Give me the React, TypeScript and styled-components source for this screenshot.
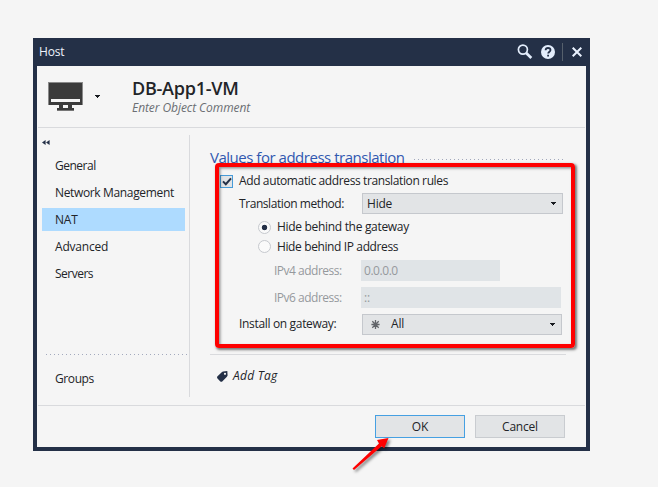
import React from "react";
import styled, { createGlobalStyle } from "styled-components";

const Global = createGlobalStyle`
  * { box-sizing: border-box; }
  html, body { margin: 0; background: #f5f5f5; }
  body { font-family: "Open Sans", "Noto Sans", sans-serif; font-size: 12px; line-height: 16px; color: #222428; overflow: hidden; }
  svg { display: block; flex: none; }
`;

const Desktop = styled.main`
  position: relative;
  width: 658px;
  height: 487px;
  padding: 38px 0 0 33px;
  background: #f5f5f5;
`;
const Text = styled.span<{ $ls?: number }>`
  white-space: pre;
  letter-spacing: ${(p) => p.$ls ?? -0.2}px;
`;
const Dialog = styled.section`
  display: flex;
  flex-direction: column;
  width: 557px;
  height: 413px;
  border: 4px solid #243047;
  border-top: 0;
`;
const TitleBar = styled.header`
  display: flex;
  align-items: center;
  height: 28px;
  padding: 0 4px 0 2px;
  background: #243047;
  color: #eef3fb;
`;
const TitleActions = styled.div`
  display: flex;
  align-items: center;
  margin-left: auto;
`;
const HelpIcon = styled.svg`
  margin-left: 8px;
`;
const TitleDivider = styled.i`
  width: 1px;
  height: 18px;
  margin: 0 9px 0 7px;
  background: #56606c;
`;
const ObjectHeader = styled.div`
  display: flex;
  height: 62px;
  margin: 0 1px;
  padding: 10px 0 0 10px;
  border-bottom: 1px solid #d9dadd;
`;
const ObjectIcon = styled.div`
  display: flex;
  width: 84px;
  padding-top: 6px;
`;
const IconMenu = styled.div`
  padding: 13px 0 0 12px;
`;
const ObjectTexts = styled.div`
  display: flex;
  flex-direction: column;
`;
const ObjectName = styled(Text)`
  font-size: 18px;
  line-height: 24px;
  font-weight: 600;
`;
const Comment = styled(Text)`
  font-style: italic;
  color: #6b6e73;
`;
const Body = styled.div`
  display: flex;
  height: 277px;
  padding-top: 7px;
`;
const Sidebar = styled.nav`
  display: flex;
  flex-direction: column;
  width: 153px;
  height: 262px;
  padding: 5px 0 0 5px;
  border-right: 1px solid #d9dadd;
`;
const NavList = styled.div`
  display: flex;
  flex-direction: column;
  gap: 4px;
  margin-top: 9px;
`;
const NavItem = styled.div<{ $active?: boolean }>`
  display: flex;
  align-items: center;
  width: 143px;
  height: 23px;
  padding-left: 13px;
  background: ${(p) => (p.$active ? "#aedbff" : "transparent")};
`;
const Dots = styled.i<{ $w: number }>`
  width: ${(p) => p.$w}px;
  height: 1px;
  background: repeating-linear-gradient(90deg, #a3a9bd 0 1px, transparent 1px 4px);
`;
const SidebarFoot = styled.div`
  display: flex;
  flex-direction: column;
  gap: 12px;
  margin-top: auto;
  margin-bottom: 7px;
`;
const FootDots = styled(Dots)`
  margin-left: 4px;
`;
const Content = styled.div`
  display: flex;
  flex-direction: column;
  width: 356px;
  margin-left: 20px;
`;
const Heading = styled.div`
  display: flex;
  justify-content: space-between;
  height: 38px;
  padding: 12px 3px 0 0;
`;
const HeadingText = styled(Text)`
  font-size: 15px;
  line-height: 20px;
  color: #3158b0;
`;
const HeadingDots = styled(Dots)`
  margin-top: 12px;
`;
const Row = styled.div<{ $h: number; $indent: number; $muted?: boolean }>`
  display: flex;
  align-items: center;
  height: ${(p) => p.$h}px;
  padding-left: ${(p) => p.$indent}px;
  color: ${(p) => (p.$muted ? "#96999d" : "inherit")};
`;
const Label = styled.div<{ $w: number }>`
  display: flex;
  width: ${(p) => p.$w}px;
`;
const Checkbox = styled.div`
  display: flex;
  align-items: center;
  justify-content: center;
  width: 13px;
  height: 13px;
  margin-right: 6px;
  border: 1px solid #479bd8;
  background: #e2e4e6;
`;
const Radio = styled.i<{ $on?: boolean }>`
  width: 13px;
  height: 13px;
  margin-right: 6px;
  border: 1px solid #c6c9ce;
  border-radius: 50%;
  background: ${(p) => (p.$on ? "radial-gradient(circle, #243047 2.4px, #fafafa 3.1px)" : "#fafafa")};
`;
const Select = styled.div<{ $w: number }>`
  display: flex;
  align-items: center;
  width: ${(p) => p.$w}px;
  height: 21px;
  padding: 0 6px 0 4px;
  border: 1px solid #c5c8cd;
  background: #e2e4e6;
  > svg { margin-left: auto; }
`;
const Glyph = styled.span`
  display: flex;
  width: 24px;
  padding-left: 4px;
`;
const Field = styled.div<{ $w: number }>`
  display: flex;
  align-items: center;
  width: ${(p) => p.$w}px;
  height: 21px;
  padding-left: 3px;
  background: #e0e4e7;
`;
const TagRow = styled.div`
  display: flex;
  align-items: center;
  gap: 5px;
  height: 43px;
  margin-top: 17px;
  padding-left: 7px;
  border-top: 1px solid #d9dadd;
  font-style: italic;
`;
const Footer = styled.footer`
  display: flex;
  justify-content: flex-end;
  gap: 10px;
  height: 42px;
  margin: 0 1px;
  padding: 9px 20px 0 0;
  border-top: 1px solid #d9dadd;
`;
const Button = styled.div<{ $primary?: boolean }>`
  display: flex;
  align-items: center;
  justify-content: center;
  width: 90px;
  height: 23px;
  border: 1px solid ${(p) => (p.$primary ? "#46a0e2" : "#c9ccd0")};
  background: #e2e4e6;
`;
const Highlight = styled.div`
  position: absolute;
  left: 215px;
  top: 163px;
  width: 360px;
  height: 185px;
  border: 4px solid #fe0000;
  border-radius: 4px;
  box-shadow: 1.5px 1.5px 2.5px rgba(0, 0, 0, 0.5), inset 1.5px 1.5px 2.5px rgba(0, 0, 0, 0.4);
`;
const Pointer = styled.svg`
  position: absolute;
  left: 345px;
  top: 430px;
  filter: drop-shadow(2px 2px 1.5px rgba(0, 0, 0, 0.5));
`;

const Caret = () => (
  <svg width="5" height="3" viewBox="0 0 5 3" shapeRendering="crispEdges">
    <path d="M0 0h5v1H0zM1 1h3v1H1zM2 2h1v1H2z" fill="#181b20" />
  </svg>
);

const navItems = [
  { label: "General", ls: -0.5 },
  { label: "Network Management", ls: -0.35 },
  { label: "NAT", ls: -0.2, active: true },
  { label: "Advanced", ls: -0.2 },
  { label: "Servers", ls: -0.5 },
];

export default function App() {
  return (
    <Desktop>
      <Global />
      <Dialog>
        <TitleBar>
          <Text>Host</Text>
          <TitleActions>
            <svg width="16" height="16" viewBox="0 0 16 16" fill="none" stroke="#e3edfc">
              <circle cx="5.9" cy="5.6" r="4.5" strokeWidth="1.7" />
              <path d="M9.2 9l5.1 5" strokeWidth="2.7" />
            </svg>
            <HelpIcon width="14" height="14" viewBox="0 0 14 14">
              <circle cx="7" cy="7" r="7" fill="#e3edfc" />
              <path d="M4.6 5.3C4.7 3.7 5.7 3 7 3c1.5 0 2.5.8 2.5 2 0 1.7-2.3 1.7-2.3 3.6M7.1 9.8v1.8" fill="none" stroke="#243047" strokeWidth="1.8" />
            </HelpIcon>
            <TitleDivider />
            <svg width="10" height="10" viewBox="0 0 10 10">
              <path d="M.7.7l8.6 8.6M9.3.7L.7 9.3" stroke="#eaf2ff" strokeWidth="2" />
            </svg>
          </TitleActions>
        </TitleBar>
        <ObjectHeader>
          <ObjectIcon>
            <svg width="35" height="29" viewBox="0 0 35 29" shapeRendering="crispEdges">
              <path d="M0 0h35v23H0z" fill="#8a8a8a" />
              <path d="M1 1h33v22H1z" fill="#3b3b3b" />
              <path d="M3 17h29v3H3z" fill="#f5f5f5" />
              <path d="M11 23h4v3h-4zM20 23h4v3h-4zM9 26h17v2H9z" fill="#3b3b3b" />
              <path d="M9 28h17v1H9z" fill="#777" />
            </svg>
            <IconMenu>
              <Caret />
            </IconMenu>
          </ObjectIcon>
          <ObjectTexts>
            <ObjectName $ls={-0.25}>DB-App1-VM</ObjectName>
            <Comment $ls={-0.07}>Enter Object Comment</Comment>
          </ObjectTexts>
        </ObjectHeader>
        <Body>
          <Sidebar>
            <svg width="8" height="5" viewBox="0 0 8 5">
              <path d="M3.6 0v5L0 2.5zM7.6 0v5L4 2.5z" fill="#243047" />
            </svg>
            <NavList>
              {navItems.map((n) => (
                <NavItem key={n.label} $active={n.active}>
                  <Text $ls={n.ls}>{n.label}</Text>
                </NavItem>
              ))}
            </NavList>
            <SidebarFoot>
              <FootDots $w={142} />
              <NavItem>
                <Text $ls={-0.4}>Groups</Text>
              </NavItem>
            </SidebarFoot>
          </Sidebar>
          <Content>
            <Heading>
              <HeadingText $ls={-0.48}>Values for address translation</HeadingText>
              <HeadingDots $w={149} />
            </Heading>
            <Row $h={16} $indent={10}>
              <Checkbox>
                <svg width="10" height="9" viewBox="0 0 10 9">
                  <path d="M1 4.4l2.8 2.8L9 1.3" fill="none" stroke="#243047" strokeWidth="2" />
                </svg>
              </Checkbox>
              <Text $ls={-0.38}>Add automatic address translation rules</Text>
            </Row>
            <Row $h={29} $indent={29}>
              <Label $w={123}><Text $ls={-0.43}>Translation method:</Text></Label>
              <Select $w={201}>
                <Text>Hide</Text>
                <Caret />
              </Select>
            </Row>
            <Row $h={18} $indent={48}>
              <Radio $on />
              <Text $ls={-0.31}>Hide behind the gateway</Text>
            </Row>
            <Row $h={21} $indent={48}>
              <Radio />
              <Text $ls={-0.38}>Hide behind IP address</Text>
            </Row>
            <Row $h={27} $indent={64} $muted>
              <Label $w={87}><Text $ls={-0.5}>IPv4 address:</Text></Label>
              <Field $w={139}><Text $ls={-0.45}>0.0.0.0</Text></Field>
            </Row>
            <Row $h={27} $indent={64} $muted>
              <Label $w={87}><Text $ls={-0.5}>IPv6 address:</Text></Label>
              <Field $w={200}><Text>::</Text></Field>
            </Row>
            <Row $h={26} $indent={29}>
              <Label $w={123}><Text $ls={-0.33}>Install on gateway:</Text></Label>
              <Select $w={200}>
                <Glyph>
                  <svg width="9" height="9" viewBox="0 0 9 9">
                    <path d="M4.5 0v9M.4 4.5h8.2M1.3 1.3l6.4 6.4M7.7 1.3L1.3 7.7" stroke="#62656a" strokeWidth="1.3" />
                  </svg>
                </Glyph>
                <Text>All</Text>
                <Caret />
              </Select>
            </Row>
            <TagRow>
              <svg width="11" height="11" viewBox="0 0 11 11">
                <path fillRule="evenodd" d="M5 1L6 .4 10.3 0l.3 4.6-.7 1.2-4.4 4.4q-1.2 1-2.4 0L.5 7.6q-.9-1.2 0-2.3zM8 1.7a1.1 1.1 0 100 2.2 1.1 1.1 0 000-2.2z" fill="#243047" />
              </svg>
              <Text $ls={0.25}>Add Tag</Text>
            </TagRow>
          </Content>
        </Body>
        <Footer>
          <Button $primary><Text>OK</Text></Button>
          <Button><Text>Cancel</Text></Button>
        </Footer>
      </Dialog>
      <Highlight />
      <Pointer width="55" height="50" viewBox="0 0 55 50">
        <path d="M7.5 38.5L34 13.5l-2-3.5 11.5-2-4.3 10.2-2.5-1.9L9 40z" fill="#fe0000" />
      </Pointer>
    </Desktop>
  );
}
